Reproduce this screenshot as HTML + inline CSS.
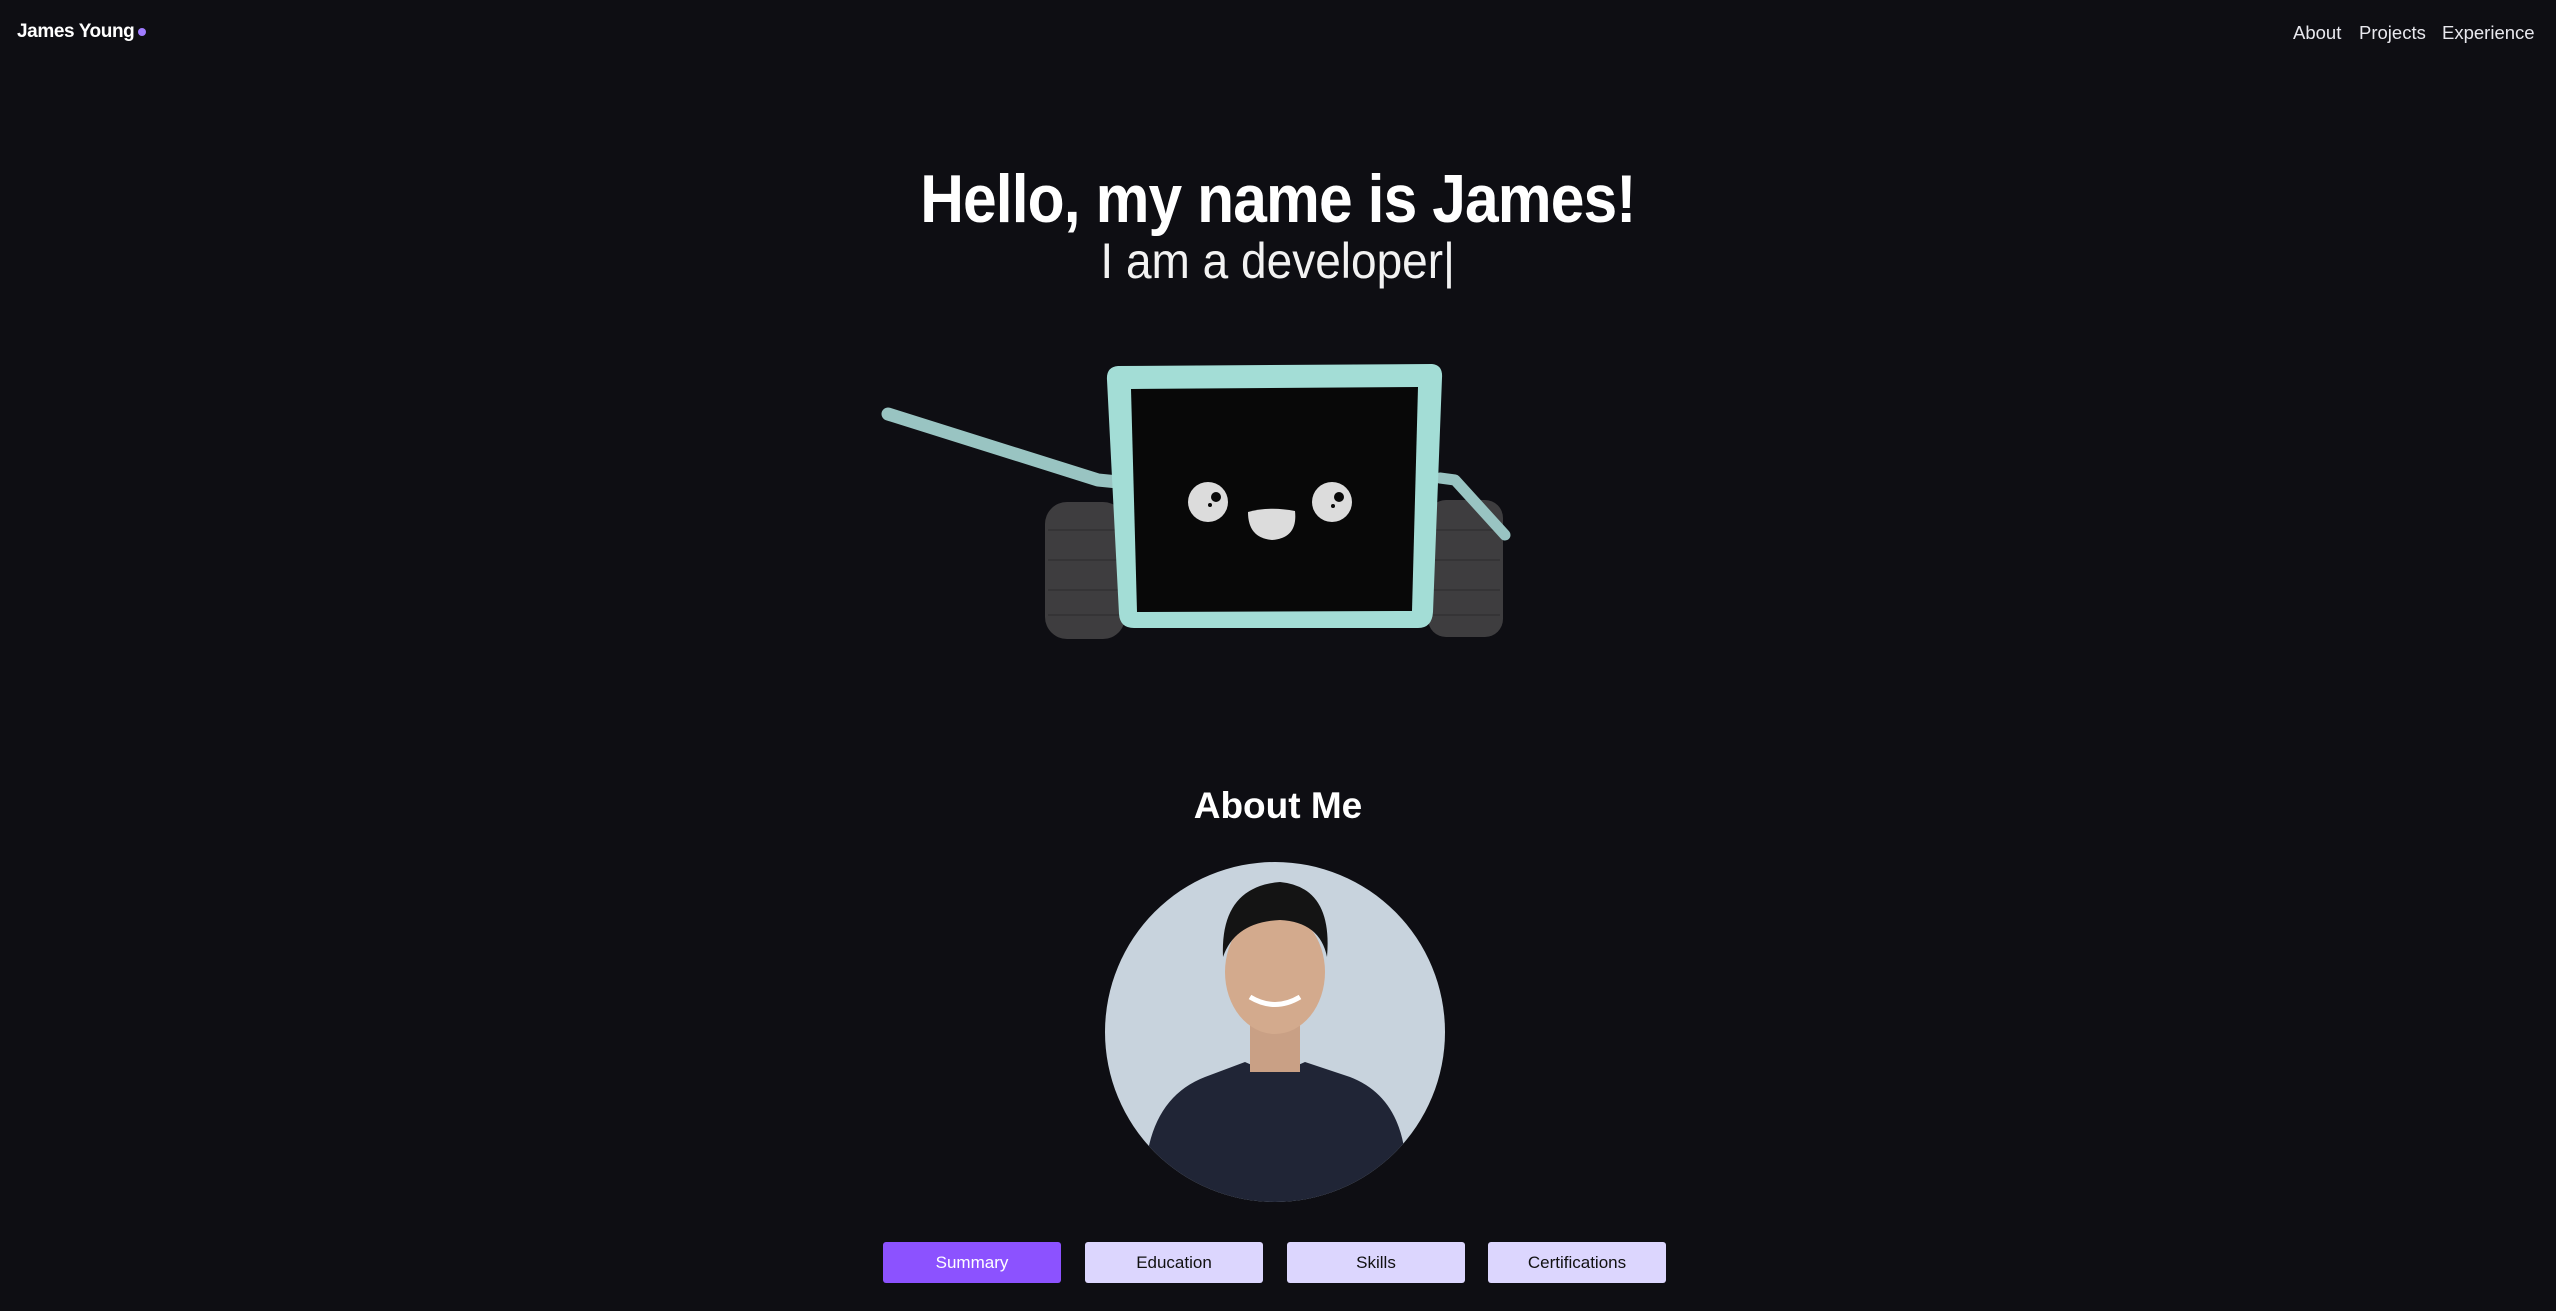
<!DOCTYPE html>
<html><head><meta charset="utf-8"><style>
html,body{margin:0;padding:0;width:2556px;height:1311px;overflow:hidden;background:#0e0e13;font-family:"Liberation Sans",sans-serif;color:#fff}
.logo{position:absolute;left:17px;top:21px;font-weight:bold;font-size:19px;letter-spacing:-0.4px}
.logo i{display:inline-block;width:8px;height:8px;border-radius:50%;background:#a07cff;margin-left:4px;vertical-align:1px}
.nav{position:absolute;top:22px;font-size:18.5px;color:#e8e8ee}
h1{position:absolute;left:0;width:2556px;top:160px;margin:0;text-align:center;font-size:68px;font-weight:bold;letter-spacing:-1px}
h1 span{display:inline-block;transform:scaleX(0.89)}
.sub{position:absolute;left:0;width:2556px;top:232px;text-align:center;font-size:50px;font-weight:300;color:#f2f2f2}
.sub span{display:inline-block;transform:scaleX(0.92)}
h2{position:absolute;left:0;width:2556px;top:785px;margin:0;text-align:center;font-size:37px;font-weight:bold}
.photo{position:absolute;left:1105px;top:862px;width:340px;height:340px;border-radius:50%;background:#c8d3dd;overflow:hidden}
.btn{position:absolute;top:1242px;height:41px;width:178px;border-radius:3px;background:#dcd6fe;color:#111;font-size:17px;text-align:center;line-height:41px}
</style></head><body>
<div class="logo">James Young<i></i></div>
<div class="nav" style="left:2293px">About</div>
<div class="nav" style="left:2359px">Projects</div>
<div class="nav" style="left:2442px">Experience</div>
<h1><span>Hello, my name is James!</span></h1>
<div class="sub"><span>I am a developer|</span></div>

<svg style="position:absolute;left:0;top:0" width="2556" height="700">
 <rect x="1045" y="502" width="80" height="137" rx="22" fill="#3e3d3f"/>
 <rect x="1428" y="500" width="75" height="137" rx="18" fill="#3e3d3f"/>
 <g stroke="#353436" stroke-width="2">
  <line x1="1048" y1="530" x2="1122" y2="530"/><line x1="1048" y1="560" x2="1122" y2="560"/><line x1="1048" y1="590" x2="1122" y2="590"/><line x1="1048" y1="615" x2="1122" y2="615"/>
  <line x1="1430" y1="530" x2="1500" y2="530"/><line x1="1430" y1="560" x2="1500" y2="560"/><line x1="1430" y1="590" x2="1500" y2="590"/><line x1="1430" y1="615" x2="1500" y2="615"/>
 </g>
 <polyline points="888,414 1098,480 1118,482" fill="none" stroke="#99c4c2" stroke-width="13" stroke-linecap="round" stroke-linejoin="round"/>
 <polyline points="1440,478 1455,480 1505,535" fill="none" stroke="#99c4c2" stroke-width="11" stroke-linecap="round" stroke-linejoin="round"/>
 <path d="M1118,366 L1432,364 Q1443,365 1442,378 L1433,612 Q1432,628 1418,628 L1134,628 Q1120,628 1119,614 L1107,380 Q1106,367 1118,366 Z" fill="#a3ddd6"/>
 <path d="M1131,389 L1418,387 L1412,611 L1137,612 Z" fill="#080808"/>
 <circle cx="1208" cy="502" r="20" fill="#dcdcdc"/>
 <circle cx="1216" cy="497" r="5" fill="#080808"/><circle cx="1210" cy="505" r="2" fill="#080808"/>
 <circle cx="1332" cy="502" r="20" fill="#dcdcdc"/>
 <circle cx="1339" cy="497" r="5" fill="#080808"/><circle cx="1333" cy="506" r="2" fill="#080808"/>
 <path d="M1248,512 Q1270,506 1295,511 Q1298,538 1272,540 Q1248,538 1248,512 Z" fill="#dcdcdc"/>
</svg>

<h2>About Me</h2>
<div class="photo">
 <svg width="340" height="340">
  <path d="M40,340 Q35,240 100,215 L140,200 Q170,215 200,200 L245,215 Q310,240 300,340 Z" fill="#202536"/>
  <rect x="145" y="150" width="50" height="60" fill="#c9a085"/>
  <ellipse cx="170" cy="110" rx="50" ry="62" fill="#d3aa8d"/>
  <path d="M118,95 Q115,25 175,20 Q228,25 222,95 Q215,60 175,58 Q130,60 118,95 Z" fill="#141414"/>
  <path d="M145,135 Q170,150 195,135" stroke="#fff" stroke-width="5" fill="none"/>
 </svg>
</div>

<div class="btn" style="left:883px;background:#8c52ff;color:#fff">Summary</div>
<div class="btn" style="left:1085px">Education</div>
<div class="btn" style="left:1287px">Skills</div>
<div class="btn" style="left:1488px">Certifications</div>
</body></html>
